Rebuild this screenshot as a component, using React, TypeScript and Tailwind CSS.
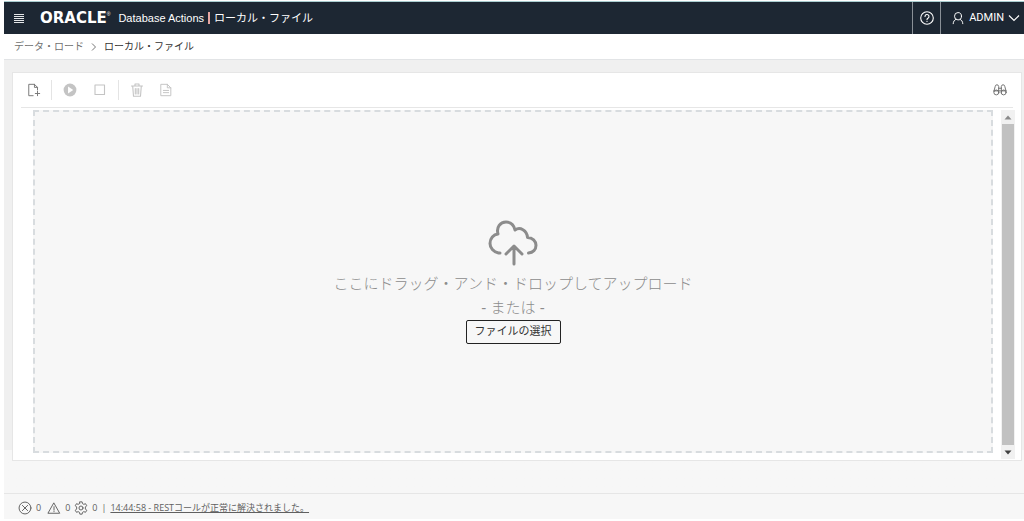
import type { ReactNode } from "react";

function Icon({ children, className }: { children: ReactNode; className: string }) {
  return (
    <svg
      viewBox="0 0 16 16"
      className={className}
      fill="none"
      stroke="currentColor"
      strokeWidth="1.1"
      strokeLinecap="round"
      strokeLinejoin="round"
      aria-hidden="true"
    >
      {children}
    </svg>
  );
}

function Header() {
  return (
    <header className="flex h-8 items-stretch bg-[#1d2733] text-white">
      <div className="flex flex-1 items-center pl-2.5">
        <button type="button" aria-label="メニュー" className="flex">
          <svg viewBox="0 0 10 10" className="size-2.5" stroke="#e4e6e8" strokeWidth="1" aria-hidden="true">
            <path d="M0 1.500h10M0 3.500h10M0 5.500h10M0 7.500h10M0 9.500h10" />
          </svg>
        </button>
        <span className="ml-4 flex items-center">
          <span className="font-['DejaVu_Sans'] text-[15px] leading-4 font-bold">ORACLE</span>
          <span className="self-start text-[5px] leading-2">®</span>
        </span>
        <span className="ml-2 text-[11px]">Database Actions</span>
        <span className="mx-1 h-3 w-0.5 bg-[#e5a5a0]" />
        <h1 className="text-[11px]">ローカル・ファイル</h1>
      </div>
      <button type="button" aria-label="ヘルプ" className="flex w-7 items-center justify-center border-l border-[#8a9097]">
        <Icon className="size-4">
          <circle cx="8" cy="8" r="6.3" />
          <path d="M6 6.500a2 2 0 1 1 3 1.700c-.7.400-1 .7-1 1.400M8 11.200v.3" />
        </Icon>
      </button>
      <button type="button" className="flex items-center border-l border-[#8a9097] pr-1 pl-2.5">
        <Icon className="size-3.5">
          <ellipse cx="8" cy="6" rx="4" ry="4.200" />
          <path d="M2.500 14.500c.2-2.600 1.300-4.400 3.300-5M13.500 14.500c-.2-2.600-1.300-4.400-3.300-5" />
        </Icon>
        <span className="ml-1 font-['Roboto'] text-[11px]">ADMIN</span>
        <svg viewBox="0 0 12 12" className="ml-1 size-3" fill="none" stroke="currentColor" strokeWidth="1.2" aria-hidden="true">
          <path d="M1 3.500l5 5 5-5" />
        </svg>
      </button>
    </header>
  );
}

function Toolbar() {
  return (
    <div className="mx-2 flex h-[35px] items-center border-b border-[#e6e6e6] pr-1.5 pl-1.5 text-[#c4c4c4]">
      <button type="button" aria-label="ファイルの追加" className="text-[#777]">
        <Icon className="size-3.5">
          <path d="M7 14.500H2v-13h6.500l3.500 3.500v3M8.500 1.500v3.500h3.500M12 9.500v5M9.500 12h5" />
        </Icon>
      </button>
      <span className="mx-2.5 h-5 w-px bg-[#e4e4e4]" />
      <button type="button" aria-label="開始" disabled>
        <svg viewBox="0 0 14 14" className="size-4" aria-hidden="true">
          <circle cx="7" cy="7" r="5.600" fill="#c4c4c4" />
          <path d="M5.300 4v6l4.500-3z" fill="#fff" />
        </svg>
      </button>
      <button type="button" aria-label="停止" disabled className="ml-3.5">
        <Icon className="size-4">
          <path d="M3 3h9.500v9.500H3z" />
        </Icon>
      </button>
      <span className="mx-2.5 h-5 w-px bg-[#e4e4e4]" />
      <button type="button" aria-label="削除" disabled>
        <Icon className="size-4">
          <path d="M2.500 4h11M6 4V2h4v2M3.700 4l.8 10.300h7L12.300 4M6.300 6.500v5.500M8 6.500v5.500M9.700 6.500v5.500" />
        </Icon>
      </button>
      <button type="button" aria-label="レポート" disabled className="ml-3.5">
        <Icon className="size-3.5">
          <path d="M2.500 1.500h7l4 4v9h-11zM9.500 1.500v4h4M5 8.500h6M5 11h6" />
        </Icon>
      </button>
      <button type="button" aria-label="検索" className="ml-auto text-[#707070]">
        <Icon className="size-3.5">
          <path d="M1 9.500L2.500 4q.3-2 2-2t2 2v7.500M15 9.500L13.500 4q-.3-2-2-2t-2 2v7.500M6.500 6h3M1 9h14" />
          <circle cx="3.800" cy="10.800" r="2.800" />
          <circle cx="12.200" cy="10.800" r="2.800" />
        </Icon>
      </button>
    </div>
  );
}

function DropZone() {
  return (
    <section className="flex flex-1 flex-col items-center justify-center border-2 border-dashed border-[#d8dcdf] bg-[#f7f7f7]">
      <svg
        viewBox="0 0 50 46"
        className="h-[46px] w-[50px]"
        fill="none"
        stroke="#8c8c8c"
        strokeWidth="3"
        strokeLinecap="round"
        strokeLinejoin="round"
        aria-hidden="true"
      >
        <path d="M12 33H10.500C5.500 32 2 28 2 23.500c0-5.200 3.500-9 8-9.500C8 7 12.500 2 18 2c4.500 0 7.800 2.500 9 8 5-3.500 12 .2 12.500 7.500C44.500 17.500 48 21 48 25.300c0 4.300-3 7.200-7.500 7.700" />
        <path d="M26 44V26.500M18 34l8-8 8 8" />
      </svg>
      <p className="mt-1.5 text-center text-[15px] leading-6 font-light text-[#8c8c8c]">
        ここにドラッグ・アンド・ドロップしてアップロード
        <br />- または -
      </p>
      <button type="button" className="h-6 rounded-xs border border-[#222] px-2 text-[11px] text-[#333]">
        ファイルの選択
      </button>
    </section>
  );
}

function ScrollTrack() {
  return (
    <div className="flex w-3.5 flex-col bg-[#f1f1f1]" aria-hidden="true">
      <svg viewBox="0 0 14 14" className="h-3.5 w-3.5">
        <path d="M3.500 9.500L7 5.500l3.500 4z" fill="#8a8a8a" />
      </svg>
      <div className="mx-px flex-1 bg-[#c1c1c1]" />
      <svg viewBox="0 0 14 14" className="h-3.5 w-3.5">
        <path d="M3.500 5.500L7 9.500l3.500-4z" fill="#404040" />
      </svg>
    </div>
  );
}

function StatusBar() {
  return (
    <footer className="flex h-[26px] items-center border-t border-[#e6e6e6] bg-[#f7f7f7] pt-0.5 pl-3.5 font-['Open_Sans','Noto_Sans_CJK_JP',sans-serif] text-[9px] text-[#606060]">
      <Icon className="size-3.5">
        <circle cx="8" cy="8" r="6.800" />
        <path d="M5 5l6 6M11 5l-6 6" />
      </Icon>
      <span className="ml-1">0</span>
      <Icon className="ml-1.5 size-3.5">
        <path d="M8 2.500L14.500 14h-13zM8 6.500v4M8 12v.2" />
      </Icon>
      <span className="ml-1">0</span>
      <Icon className="ml-1 size-3.5">
        <path d="M6.700 1h2.600l.4 2 1.500.8 2-.7 1.300 2.300L13 6.900v2.200l1.500 1.500-1.300 2.300-2-.7-1.500.8-.4 2H6.700l-.4-2-1.500-.8-2 .7-1.300-2.300L3 9.100V6.900L1.500 5.400l1.300-2.300 2 .7L6.300 3z" />
        <circle cx="8" cy="8" r="2.300" />
      </Icon>
      <span className="ml-1">0</span>
      <span className="mx-1">|</span>
      <a href="#log" className="underline">
        14:44:58 - RESTコールが正常に解決されました。
      </a>
    </footer>
  );
}

export default function App() {
  return (
    <div className="flex min-h-screen flex-col bg-white pb-0.5 pl-1 font-['Liberation_Sans','Noto_Sans_CJK_JP',sans-serif]">
      <div className="mt-px h-px bg-[#a9cdd0]" />
      <Header />
      <nav aria-label="パンくずリスト" className="flex h-[26px] items-center gap-1.5 border-b border-[#e2e4e6] pl-2.5 text-[10px]">
        <a href="#load" className="text-[#707070]">
          データ・ロード
        </a>
        <svg viewBox="0 0 8 8" className="size-2" fill="none" stroke="#777" aria-hidden="true">
          <path d="M2 .5L5.500 4 2 7.500" />
        </svg>
        <span className="text-[#333]">ローカル・ファイル</span>
      </nav>
      <main className="flex flex-1 flex-col bg-linear-to-b from-[#f0f0f0] from-90% to-[#f7f7f7] to-90% pt-3 pr-0.5 pb-8 pl-2">
        <div className="flex flex-1 flex-col border border-[#e6e6e6] bg-white">
          <Toolbar />
          <div className="flex flex-1 gap-2 pt-0.5 pr-1.5 pb-px pl-5">
            <div className="flex flex-1 pb-1.5">
              <DropZone />
            </div>
            <ScrollTrack />
          </div>
        </div>
      </main>
      <StatusBar />
    </div>
  );
}
